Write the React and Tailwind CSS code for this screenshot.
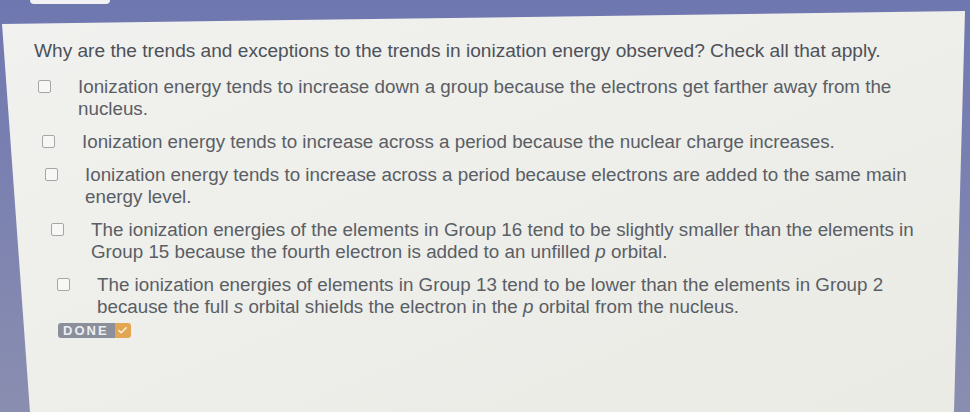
import { Check } from 'lucide-react';

const options = [
  {
    box: 'ml-[38px]',
    lines: ['Ionization energy tends to increase down a group because the electrons get farther away from the', 'nucleus.'],
  },
  {
    box: 'ml-[42px]',
    lines: ['Ionization energy tends to increase across a period because the nuclear charge increases.'],
  },
  {
    box: 'ml-[45px]',
    lines: ['Ionization energy tends to increase across a period because electrons are added to the same main', 'energy level.'],
  },
  {
    box: 'ml-[51px]',
    lines: [
      'The ionization energies of the elements in Group 16 tend to be slightly smaller than the elements in',
      <>Group 15 because the fourth electron is added to an unfilled <i>p</i> orbital.</>,
    ],
  },
  {
    box: 'ml-[57px]',
    lines: [
      'The ionization energies of elements in Group 13 tend to be lower than the elements in Group 2',
      <>because the full <i>s</i> orbital shields the electron in the <i>p</i> orbital from the nucleus.</>,
    ],
  },
];

export default function App() {
  return (
    <div className="relative w-[970px] h-[412px] overflow-hidden bg-gradient-to-b from-[#6f77b0] to-[#8a8eb0] font-['Liberation_Sans',Arial,sans-serif]">
      <div className="absolute left-[30px] top-0 w-[80px] h-[4px] rounded-b-md bg-[#f2f2f4]" />
      <div className="h-[412px] bg-gradient-to-br from-[#f1f1ef] via-[#eeeeea] to-[#eaebe5] pt-[40px] [clip-path:polygon(2px_24px,965px_11px,954px_412px,30px_412px)]">
        <p className="ml-[34px] text-[19.1px] leading-[22px] text-[#4d5159] whitespace-nowrap">
          Why are the trends and exceptions to the trends in ionization energy observed? Check all that apply.
        </p>
        <div className="mt-[14px] flex flex-col gap-[11px]">
          {options.map((o, i) => (
            <Option key={i} {...o} />
          ))}
        </div>
        <div className="ml-[58px] mt-[5px] flex items-stretch h-[15px]">
          <span className="flex items-center pl-[5px] pr-[6px] rounded-l-[3px] bg-[#8b8e9b] text-[#eceef2] text-[13px] font-bold tracking-[2px]">
            DONE
          </span>
          <span className="flex items-center justify-center w-[16px] rounded-r-[3px] bg-[#e2a552]">
            <Check size={11} strokeWidth={3.5} className="text-[#fbf1dc]" />
          </span>
        </div>
      </div>
    </div>
  );
}

function Option({ box, lines }) {
  return (
    <div className={`flex items-start ${box}`}>
      <span className="mt-[4px] w-[13px] h-[13px] shrink-0 rounded-[2px] border border-[#a4a6a8] bg-[#f7f7f5]" />
      <div className="ml-[27px] flex flex-col text-[18.8px] leading-[22px] text-[#5a5e65]">
        {lines.map((l, i) => (
          <span key={i} className="whitespace-nowrap">{l}</span>
        ))}
      </div>
    </div>
  );
}
